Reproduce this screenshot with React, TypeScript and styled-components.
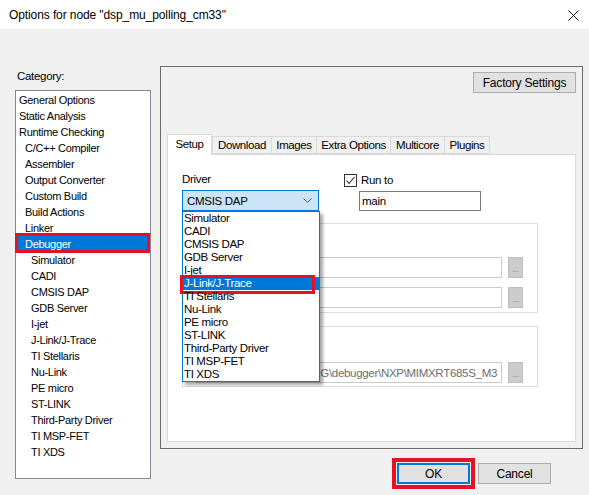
import React from 'react'
import styled, { createGlobalStyle } from 'styled-components'

const CATEGORIES: [string, number][] = [
  ['General Options', 0],
  ['Static Analysis', 0],
  ['Runtime Checking', 0],
  ['C/C++ Compiler', 1],
  ['Assembler', 1],
  ['Output Converter', 1],
  ['Custom Build', 1],
  ['Build Actions', 1],
  ['Linker', 1],
  ['Debugger', 1],
  ['Simulator', 2],
  ['CADI', 2],
  ['CMSIS DAP', 2],
  ['GDB Server', 2],
  ['I-jet', 2],
  ['J-Link/J-Trace', 2],
  ['TI Stellaris', 2],
  ['Nu-Link', 2],
  ['PE micro', 2],
  ['ST-LINK', 2],
  ['Third-Party Driver', 2],
  ['TI MSP-FET', 2],
  ['TI XDS', 2],
]

const DRIVERS = [
  'Simulator',
  'CADI',
  'CMSIS DAP',
  'GDB Server',
  'I-jet',
  'J-Link/J-Trace',
  'TI Stellaris',
  'Nu-Link',
  'PE micro',
  'ST-LINK',
  'Third-Party Driver',
  'TI MSP-FET',
  'TI XDS',
]

// tab label and its width in px
const TABS: [string, number][] = [
  ['Setup', 45],
  ['Download', 60],
  ['Images', 46],
  ['Extra Options', 75],
  ['Multicore', 55],
  ['Plugins', 46],
]

export default function App() {
  return (
    <>
      <GlobalStyle />
      <Window>
        <TitleBar>
          <Title>Options for node "dsp_mu_polling_cm33"</Title>
          <CloseButton>
            <svg width="11" height="11" viewBox="0 0 11 11">
              <path d="M0.5 0.5 L10.5 10.5 M10.5 0.5 L0.5 10.5" stroke="#111" strokeWidth="1" />
            </svg>
          </CloseButton>
        </TitleBar>
        <Body>
          <CategoryColumn>
            <CategoryLabel>Category:</CategoryLabel>
            <CategoryList>
              {CATEGORIES.map(([name, level]) => (
                <CategoryItem key={name} $level={level} $selected={name === 'Debugger'}>
                  {name}
                </CategoryItem>
              ))}
            </CategoryList>
          </CategoryColumn>
          <MainColumn>
            <OptionsPanel>
              <PanelHeader>
                <FactoryButton>Factory Settings</FactoryButton>
              </PanelHeader>
              <TabStrip>
                {TABS.map(([tab, width], i) => (
                  <Tab key={tab} $active={i === 0} $width={width}>
                    {tab}
                  </Tab>
                ))}
              </TabStrip>
              <TabPage>
                <TopRow>
                  <DriverColumn>
                    <FieldLabel>Driver</FieldLabel>
                    <ComboWrap>
                      <Combo>
                        <span>CMSIS DAP</span>
                        <svg width="9" height="5" viewBox="0 0 9 5">
                          <path d="M0.5 0.5 L4.5 4.5 L8.5 0.5" fill="none" stroke="#555" strokeWidth="1" />
                        </svg>
                      </Combo>
                      <DropList>
                        {DRIVERS.map((d) => (
                          <DropItem key={d} $selected={d === 'J-Link/J-Trace'}>
                            {d}
                          </DropItem>
                        ))}
                      </DropList>
                    </ComboWrap>
                  </DriverColumn>
                  <RunToColumn>
                    <CheckRow>
                      <CheckBox>
                        <svg width="11" height="11" viewBox="0 0 11 11">
                          <path d="M1.5 5.5 L4 8.5 L9.5 2" fill="none" stroke="#222" strokeWidth="1.1" />
                        </svg>
                      </CheckBox>
                      <span>Run to</span>
                    </CheckRow>
                    <TextBox>main</TextBox>
                  </RunToColumn>
                </TopRow>
                <GroupBox $height={90} $padTop={33} $gap={12}>
                  <PathRow>
                    <DisabledField />
                    <BrowseButton>...</BrowseButton>
                  </PathRow>
                  <PathRow>
                    <DisabledField />
                    <BrowseButton>...</BrowseButton>
                  </PathRow>
                </GroupBox>
                <GroupBox $height={61} $padTop={35} $gap={13}>
                  <PathRow>
                    <DisabledField>$TOOLKIT_DIR$\CONFIG\debugger\NXP\MIMXRT685S_M3</DisabledField>
                    <BrowseButton>...</BrowseButton>
                  </PathRow>
                </GroupBox>
              </TabPage>
            </OptionsPanel>
            <DialogButtons>
              <Marked>
                <DefaultButton>OK</DefaultButton>
              </Marked>
              <PushButton>Cancel</PushButton>
            </DialogButtons>
          </MainColumn>
        </Body>
      </Window>
    </>
  )
}

const GlobalStyle = createGlobalStyle`
  html, body {
    margin: 0;
    padding: 0;
    background: #f0f0f0;
  }
  * {
    box-sizing: border-box;
  }
`

const Window = styled.div`
  width: 589px;
  height: 495px;
  background: #f0f0f0;
  font-family: 'Liberation Sans', Arial, sans-serif;
  font-size: 11px;
  letter-spacing: -0.3px;
  color: #000;
  overflow: hidden;
`

const TitleBar = styled.div`
  height: 29px;
  background: #fff;
  display: flex;
  align-items: center;
  justify-content: space-between;
  padding: 1px 9px 0 9px;
`

const Title = styled.div`
  font-size: 12px;
  letter-spacing: -0.1px;
`

const CloseButton = styled.div`
  display: flex;
  margin-right: 1px;
`

const Body = styled.div`
  display: flex;
  padding-left: 15px;
`

const CategoryColumn = styled.div`
  width: 136px;
  padding-top: 40px;
  display: flex;
  flex-direction: column;
`

const CategoryLabel = styled.div`
  line-height: 14px;
  height: 14px;
  padding-left: 2px;
  margin-bottom: 7px;
  font-size: 11.5px;
`

const CategoryList = styled.div`
  height: 389px;
  background: #fff;
  border: 1px solid #828790;
  padding: 1px;
`

const CategoryItem = styled.div<{ $level: number; $selected: boolean }>`
  position: relative;
  height: 16px;
  line-height: 16px;
  padding-left: ${(p) => 2 + p.$level * 6}px;
  white-space: nowrap;
  background: ${(p) => (p.$selected ? '#0078d7' : 'transparent')};
  color: ${(p) => (p.$selected ? '#fff' : '#000')};

  ${(p) =>
    p.$selected &&
    `
    &::after {
      content: '';
      position: absolute;
      top: -3px;
      left: -2px;
      right: -1px;
      bottom: -1px;
      border: 3px solid #e81123;
    }
  `}
`

const MainColumn = styled.div`
  margin-left: 9px;
  width: 423px;
  padding-top: 37px;
  display: flex;
  flex-direction: column;
`

const OptionsPanel = styled.div`
  height: 383px;
  border: 1px solid #6b6b6b;
  padding: 5px 6px 6px 6px;
  display: flex;
  flex-direction: column;
`

const PanelHeader = styled.div`
  display: flex;
  justify-content: flex-end;
  height: 21px;
`

const PushButton = styled.div`
  height: 21px;
  width: 73px;
  border: 1px solid #adadad;
  background: #e1e1e1;
  display: flex;
  align-items: center;
  justify-content: center;
  font-size: 12px;
  letter-spacing: -0.2px;
`

const FactoryButton = styled(PushButton)`
  width: 103px;
`

const DefaultButton = styled(PushButton)`
  border: 2px solid #0078d7;
`

const Marked = styled.div`
  border: 4px solid #e81123;
  padding: 1px;
  background: #f0f0f0;
`

const DialogButtons = styled.div`
  display: flex;
  justify-content: flex-end;
  align-items: center;
  gap: 3px;
  margin-top: 9px;
  padding-right: 32px;
`

const TabStrip = styled.div`
  display: flex;
  align-items: flex-end;
  height: 20px;
  margin-top: 41px;
  position: relative;
  z-index: 1;
`

const Tab = styled.div<{ $active: boolean; $width: number }>`
  width: ${(p) => p.$width}px;
  height: ${(p) => (p.$active ? 21 : 18)}px;
  margin-bottom: ${(p) => (p.$active ? -1 : 0)}px;
  padding-bottom: ${(p) => (p.$active ? 2 : 0)}px;
  display: flex;
  align-items: center;
  justify-content: center;
  background: ${(p) => (p.$active ? '#fff' : '#f0f0f0')};
  border: 1px solid #d9d9d9;
  border-bottom: ${(p) => (p.$active ? 'none' : '1px solid #d9d9d9')};
  margin-left: ${(p) => (p.$active ? 0 : -1)}px;
  font-size: 11.5px;
  letter-spacing: -0.4px;
  white-space: nowrap;

  &:nth-child(2) {
    margin-left: 0;
  }
`

const TabPage = styled.div`
  flex: 1;
  background: #fff;
  border: 1px solid #d9d9d9;
  padding: 17px 0 0 14px;
  display: flex;
  flex-direction: column;
  position: relative;
`

const TopRow = styled.div`
  display: flex;
  position: relative;
  z-index: 2;
`

const DriverColumn = styled.div`
  width: 137px;
  display: flex;
  flex-direction: column;
`

const FieldLabel = styled.div`
  height: 14px;
  line-height: 14px;
  margin-bottom: 4px;
  font-size: 11.5px;
`

const ComboWrap = styled.div`
  position: relative;
`

const Combo = styled.div`
  height: 21px;
  width: 137px;
  border: 1px solid #0078d7;
  background: #cce4f7;
  display: flex;
  align-items: center;
  justify-content: space-between;
  padding: 0 6px 0 4px;
  font-size: 11.5px;
`

const DropList = styled.div`
  position: absolute;
  top: 100%;
  left: 0;
  width: 138px;
  background: #fff;
  border: 1px solid #0078d7;
  box-shadow: 3px 3px 3px rgba(0, 0, 0, 0.35);
  z-index: 5;
`

const DropItem = styled.div<{ $selected: boolean }>`
  position: relative;
  height: 13px;
  line-height: 13px;
  padding-left: 1px;
  white-space: nowrap;
  font-size: 11.5px;
  letter-spacing: -0.35px;
  background: ${(p) => (p.$selected ? '#0078d7' : 'transparent')};
  color: ${(p) => (p.$selected ? '#fff' : '#000')};

  ${(p) =>
    p.$selected &&
    `
    &::after {
      content: '';
      position: absolute;
      top: -2px;
      left: -3px;
      right: 4px;
      bottom: -4px;
      border: 3px solid #e81123;
    }
  `}
`

const RunToColumn = styled.div`
  margin-left: 25px;
  padding-top: 1px;
  display: flex;
  flex-direction: column;
`

const CheckRow = styled.div`
  display: flex;
  align-items: center;
  gap: 4px;
  height: 14px;
  font-size: 11.5px;
`

const CheckBox = styled.div`
  width: 13px;
  height: 13px;
  border: 1px solid #333;
  background: #fff;
  display: flex;
  align-items: center;
  justify-content: center;
`

const TextBox = styled.div`
  margin: 4px 0 0 15px;
  width: 122px;
  height: 20px;
  border: 1px solid #7a7a7a;
  padding-left: 2px;
  display: flex;
  align-items: center;
  font-size: 11.5px;
`

const GroupBox = styled.div<{ $height: number; $padTop: number; $gap: number }>`
  width: 356px;
  height: ${(p) => p.$height}px;
  border: 1px solid #dcdcdc;
  margin-top: ${(p) => p.$gap}px;
  padding: ${(p) => p.$padTop}px 0 0 13px;
  display: flex;
  flex-direction: column;
  gap: 9px;
`

const PathRow = styled.div`
  display: flex;
  align-items: center;
  gap: 6px;
`

const DisabledField = styled.div`
  width: 306px;
  height: 21px;
  border: 1px solid #cccccc;
  background: #fff;
  color: #6d6d6d;
  padding-left: 2px;
  display: flex;
  align-items: center;
  white-space: nowrap;
  overflow: hidden;
  font-size: 11.5px;
`

const BrowseButton = styled.div`
  width: 15px;
  height: 21px;
  border: 1px solid #bfbfbf;
  background: #cccccc;
  color: #9a8f8f;
  display: flex;
  align-items: center;
  justify-content: center;
  font-size: 9px;
  padding-top: 3px;
`
